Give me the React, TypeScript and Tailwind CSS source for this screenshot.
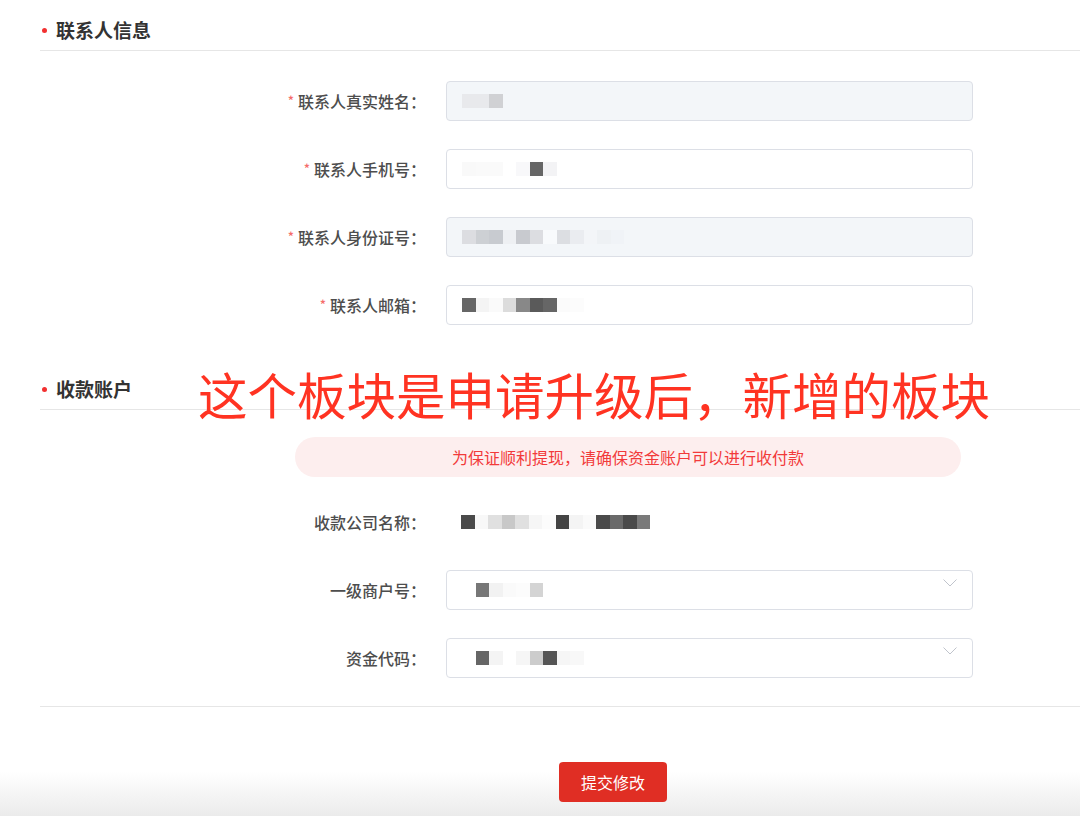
import React from "react";

const font = { fontFamily: '"Noto Sans CJK SC", "Noto Sans", sans-serif' };

// blurred value mosaics, one colour per 13.5px cell
const mosaics: Record<string, string[]> = {
  name: ["#e8e9ec", "#e8e9ec", "#d0d1d4"],
  phone: ["#f9f9f9", "#fafafa", "#fafafa", "#ffffff", "#f8f8fa", "#666666", "#f3f3f5"],
  idcard: ["#dcdde1", "#cdd0d4", "#c8cbd0", "#eef0f3", "#c8cacf", "#dcdde1", "#f8fafc", "#dcdee2", "#eaecf0", "#f3f5f8", "#eef1f4", "#f0f3f7"],
  email: ["#666666", "#f4f4f4", "#fafafa", "#dcdcdc", "#888888", "#5a5a5a", "#666666", "#fbfbfb", "#fcfcfc"],
  company: ["#4a4a4a", "#f8f8f8", "#e0e0e0", "#c8c8c8", "#e0e0e0", "#f6f6f6", "#fcfcfc", "#444444", "#f4f4f4", "#fafafa", "#4a4a4a", "#6a6a6a", "#4a4a4a", "#7a7a7a"],
  merchant: ["#ffffff", "#777777", "#f2f2f2", "#fafafa", "#fcfcfc", "#d4d4d4"],
  fund: ["#ffffff", "#666666", "#f4f4f4", "#ffffff", "#f6f6f6", "#cccccc", "#555555", "#f6f6f6", "#f8f8f8"],
};

function Mosaic({ id }: { id: string }) {
  return (
    <div className="flex">
      {mosaics[id].map((c, i) => (
        <div key={i} className="w-[13.5px] h-[14px]" style={{ backgroundColor: c }} />
      ))}
    </div>
  );
}

function SectionTitle({ title }: { title: string }) {
  return (
    <div className="h-[41px] flex items-center border-b border-[#e6e6e6]">
      <span className="w-[5px] h-[5px] rounded-full bg-[#f23030] ml-[2px] mr-[9px] mt-[1px]" />
      <span className="text-[19px] font-bold text-[#333]">{title}</span>
    </div>
  );
}

function Label({ text, required }: { text: string; required?: boolean }) {
  return (
    <div className="w-[406px] pr-[20px] flex justify-end items-center text-[16px] font-medium text-[#4d4d4d]">
      {required && <span className="text-[#f56c6c] text-[13px] mr-[4px]">*</span>}
      <span>{text}：</span>
    </div>
  );
}

function InputRow({ label, id, disabled, select }: { label: string; id: string; disabled?: boolean; select?: boolean }) {
  return (
    <div className="flex h-[40px]">
      <Label text={label} required={!select} />
      <div
        className={
          "relative w-[527px] h-[40px] rounded-[4px] border border-[#dcdfe6] flex items-center pl-[15px] " +
          (disabled ? "bg-[#f3f6f9]" : "bg-white")
        }
      >
        <Mosaic id={id} />
        {select && (
          <svg className="absolute right-[15px] top-[8px]" width="14" height="8" viewBox="0 0 14 8" fill="none">
            <polyline points="0.5,0.5 7,7 13.5,0.5" stroke="#c0c4cc" strokeWidth="1" />
          </svg>
        )}
      </div>
    </div>
  );
}

export default function App() {
  return (
    <div
      className="relative w-[1080px] h-[816px] overflow-hidden bg-[linear-gradient(to_bottom,#ffffff_0px,#ffffff_772px,#ebebeb_816px)]"
      style={font}
    >
      <div className="pl-[40px] pt-[10px]">
        <SectionTitle title="联系人信息" />
        <div className="flex flex-col gap-[28px] pt-[30px]">
          <InputRow label="联系人真实姓名" id="name" disabled />
          <InputRow label="联系人手机号" id="phone" />
          <InputRow label="联系人身份证号" id="idcard" disabled />
          <InputRow label="联系人邮箱" id="email" />
        </div>

        <div className="mt-[44px]">
          <SectionTitle title="收款账户" />
        </div>

        <div className="ml-[255px] mt-[27px] w-[666px] h-[40px] rounded-full bg-[#fdeeee] flex items-center justify-center text-[16px] text-[#f23a3a]">
          为保证顺利提现，请确保资金账户可以进行收付款
        </div>

        <div className="flex flex-col gap-[28px] mt-[25px]">
          <div className="flex h-[40px]">
            <Label text="收款公司名称" />
            <div className="flex items-center pl-[15px]">
              <Mosaic id="company" />
            </div>
          </div>
          <InputRow label="一级商户号" id="merchant" select />
          <InputRow label="资金代码" id="fund" select />
        </div>

        <div className="mt-[28px] border-b border-[#e6e6e6]" />

        <div className="flex mt-[55px] pl-[519px]">
          <button className="w-[108px] h-[40px] rounded-[4px] bg-[#e02e24] text-white text-[16px]">
            提交修改
          </button>
        </div>
      </div>

      <div className="absolute left-[198px] top-[362px] text-[49.5px] leading-[64px] text-[#ff3322] whitespace-nowrap">
        这个板块是申请升级后，新增的板块
      </div>
    </div>
  );
}
